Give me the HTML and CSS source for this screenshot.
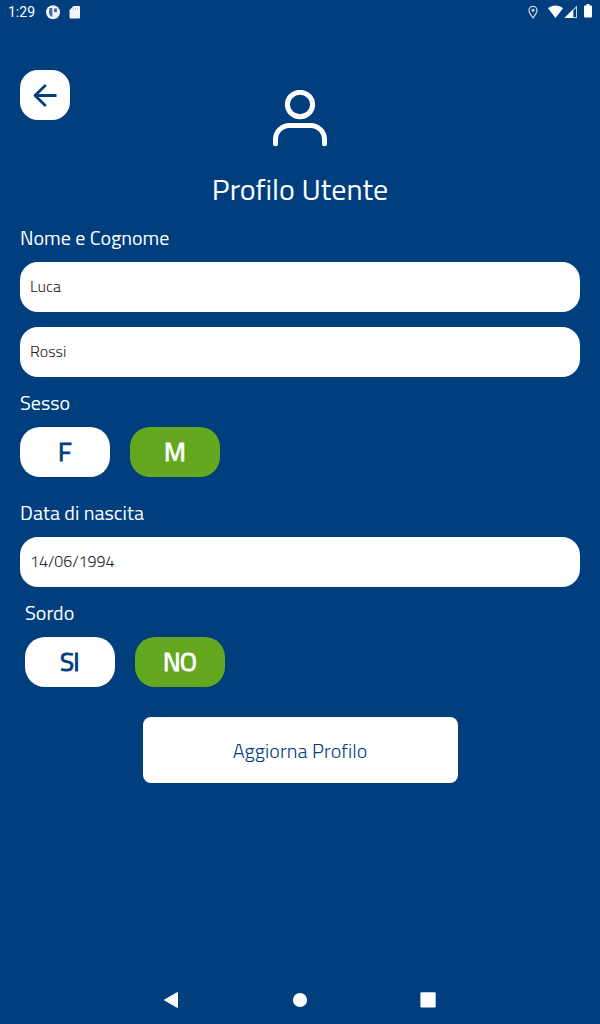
FILE: index.html
```html
<!DOCTYPE html>
<html lang="it">
<head>
<meta charset="UTF-8" />
<meta name="viewport" content="width=device-width, initial-scale=1" />
<title>Profilo Utente</title>
<link rel="stylesheet" href="styles.css">
</head>
<body>
  <div class="status-bar">
    <span class="time">1:29</span>
    <svg class="status-left" width="40" height="24" viewBox="0 0 40 24">
      <circle cx="8" cy="12.2" r="7" fill="#fff" fill-opacity=".93" />
      <path d="M4.500 8h2.800v8.500H6A5 5 0 0 1 4 13zM9 8.500h3V12H9z" fill="#003e7e" fill-opacity=".75" />
      <path d="M28.500 6H34a1 1 0 0 1 1 1v10.500a1 1 0 0 1-1 1h-8.500a1 1 0 0 1-1-1V10z" fill="#fff" fill-opacity=".95" />
      <path d="M28.500 8v1.800M30.500 8v1.800M32.500 8v1.800" stroke="#aebfd2" stroke-width=".8" />
    </svg>
    <svg class="status-right" width="68" height="24" viewBox="0 0 68 24">
      <path d="M5 18C3 15.300 1 12.800 1 10.300a4 4 0 0 1 8 0c0 2.500-2 5-4 7.700z" fill="none" stroke="#c3d1e0" stroke-width="1.300" />
      <circle cx="5" cy="10.300" r="1.500" fill="#c3d1e0" />
      <path d="M20 8.300c4.500-3.600 10.500-3.600 15 0L27.500 18z" fill="#fff" />
      <path d="M36.500 18L49 5.500V18z" fill="#c3d1e0" />
      <path d="M45.500 10.500L48 8v9h-2.500z" fill="#003e7e" />
      <path d="M36.500 18L45 9.500V18z" fill="#fff" />
      <path d="M58.500 4h3v1.500H63a1 1 0 0 1 1 1V16.500a1 1 0 0 1-1 1h-6a1 1 0 0 1-1-1v-10a1 1 0 0 1 1-1h1.500z" fill="#fff" />
    </svg>
  </div>

  <main class="profile">
    <div class="header">
      <button class="back" type="button" aria-label="Indietro">
        <svg width="50" height="50" viewBox="0 0 50 50">
          <path d="M36.500 25.500H15M25.800 15L15 25.500 25.800 36" />
        </svg>
      </button>
      <svg class="user-icon" width="60" height="60" viewBox="0 0 60 60">
        <ellipse cx="30" cy="14.500" rx="12.600" ry="12.200" />
        <path d="M5.500 53.700V49.500a14 14 0 0 1 14-14h21a14 14 0 0 1 14 14V53.700" />
      </svg>
    </div>
    <h1>Profilo Utente</h1>

    <div class="label">Nome e Cognome</div>
    <div class="field first">Luca</div>
    <div class="field">Rossi</div>

    <div class="label">Sesso</div>
    <div class="choices">
      <button type="button">F</button>
      <button type="button" class="selected">M</button>
    </div>

    <div class="label birth">Data di nascita</div>
    <div class="field">14/06/1994</div>

    <div class="deaf">
      <div class="label">Sordo</div>
      <div class="choices">
        <button type="button">SI</button>
        <button type="button" class="selected">NO</button>
      </div>
    </div>

    <button type="button" class="update">Aggiorna Profilo</button>
  </main>

  <nav class="nav-bar">
    <svg width="16" height="18" viewBox="0 0 16 18"><path d="M.5 9L13.500 1.500v15z" stroke="#fff" stroke-linejoin="round" /></svg>
    <svg width="16" height="18" viewBox="0 0 16 18"><circle cx="8" cy="9" r="7.100" /></svg>
    <svg width="16" height="18" viewBox="0 0 16 18"><rect x=".4" y="1.300" width="15.300" height="15.300" rx="1" /></svg>
  </nav>
</body>
</html>
```
FILE: styles.css
```css
body, html {
  margin: 0; padding: 0; height: 100%; overflow: hidden;
}
body {
  display: flex;
  flex-direction: column;
  background: #003e7e;
  color: #fff;
  font-family: "Titillium Web", Roboto, sans-serif;
}
svg {
  display: block;
}
button {
  border: 0;
  padding: 0;
  font-family: inherit;
}
.status-bar {
  display: flex;
  align-items: center;
  height: 24px;
  padding: 0 4px 0 8px;
}
.time {
  font-family: Roboto, sans-serif;
  font-size: 14px;
  width: 37px;
}
.status-right {
  margin-left: auto;
}
.profile {
  flex: 1;
  padding: 46px 20px 0;
}
.header {
  display: grid;
  grid-template-columns: 50px 1fr 50px;
  height: 90px;
}
.back {
  width: 50px;
  height: 50px;
  border-radius: 18px;
  background: #fff;
}
.back path {
  fill: none;
  stroke: #003e7e;
  stroke-width: 2.8;
  stroke-linejoin: round;
}
.user-icon {
  margin: 20px auto 0;
  fill: none;
  stroke: #fff;
  stroke-width: 5;
  stroke-linecap: round;
}
h1 {
  margin: 0;
  height: 60px;
  line-height: 58px;
  font-size: 30px;
  font-weight: 400;
  text-align: center;
}
.label {
  height: 42px;
  line-height: 36px;
  font-size: 20px;
}
.field {
  height: 50px;
  line-height: 49px;
  margin-bottom: 8px;
  padding: 0 10px;
  border-radius: 18px;
  background: #fff;
  color: #222;
  font-size: 16px;
  font-weight: 300;
}
.field.first {
  margin-bottom: 15px;
}
.choices {
  display: flex;
  gap: 20px;
}
.choices button {
  width: 90px;
  height: 50px;
  padding: 0 1px 2px 0;
  border-radius: 20px;
  background: #fff;
  color: #003e7e;
  font-size: 26px;
  font-weight: 400;
  letter-spacing: -0.8px;
  -webkit-text-stroke: 0.9px;
}
.choices .selected {
  background: #64a81f;
  color: #fff;
}
.birth {
  margin-top: 18px;
}
.deaf {
  padding-left: 5px;
}
.update {
  display: block;
  width: 315px;
  height: 66px;
  margin: 30px auto 0;
  border-radius: 8px;
  background: #fff;
  color: #003e7e;
  font-size: 20px;
  font-weight: 300;
  letter-spacing: 0.1px;
}
.nav-bar {
  display: flex;
  justify-content: center;
  align-items: center;
  gap: 112px;
  height: 48px;
  fill: #fff;
}
```
